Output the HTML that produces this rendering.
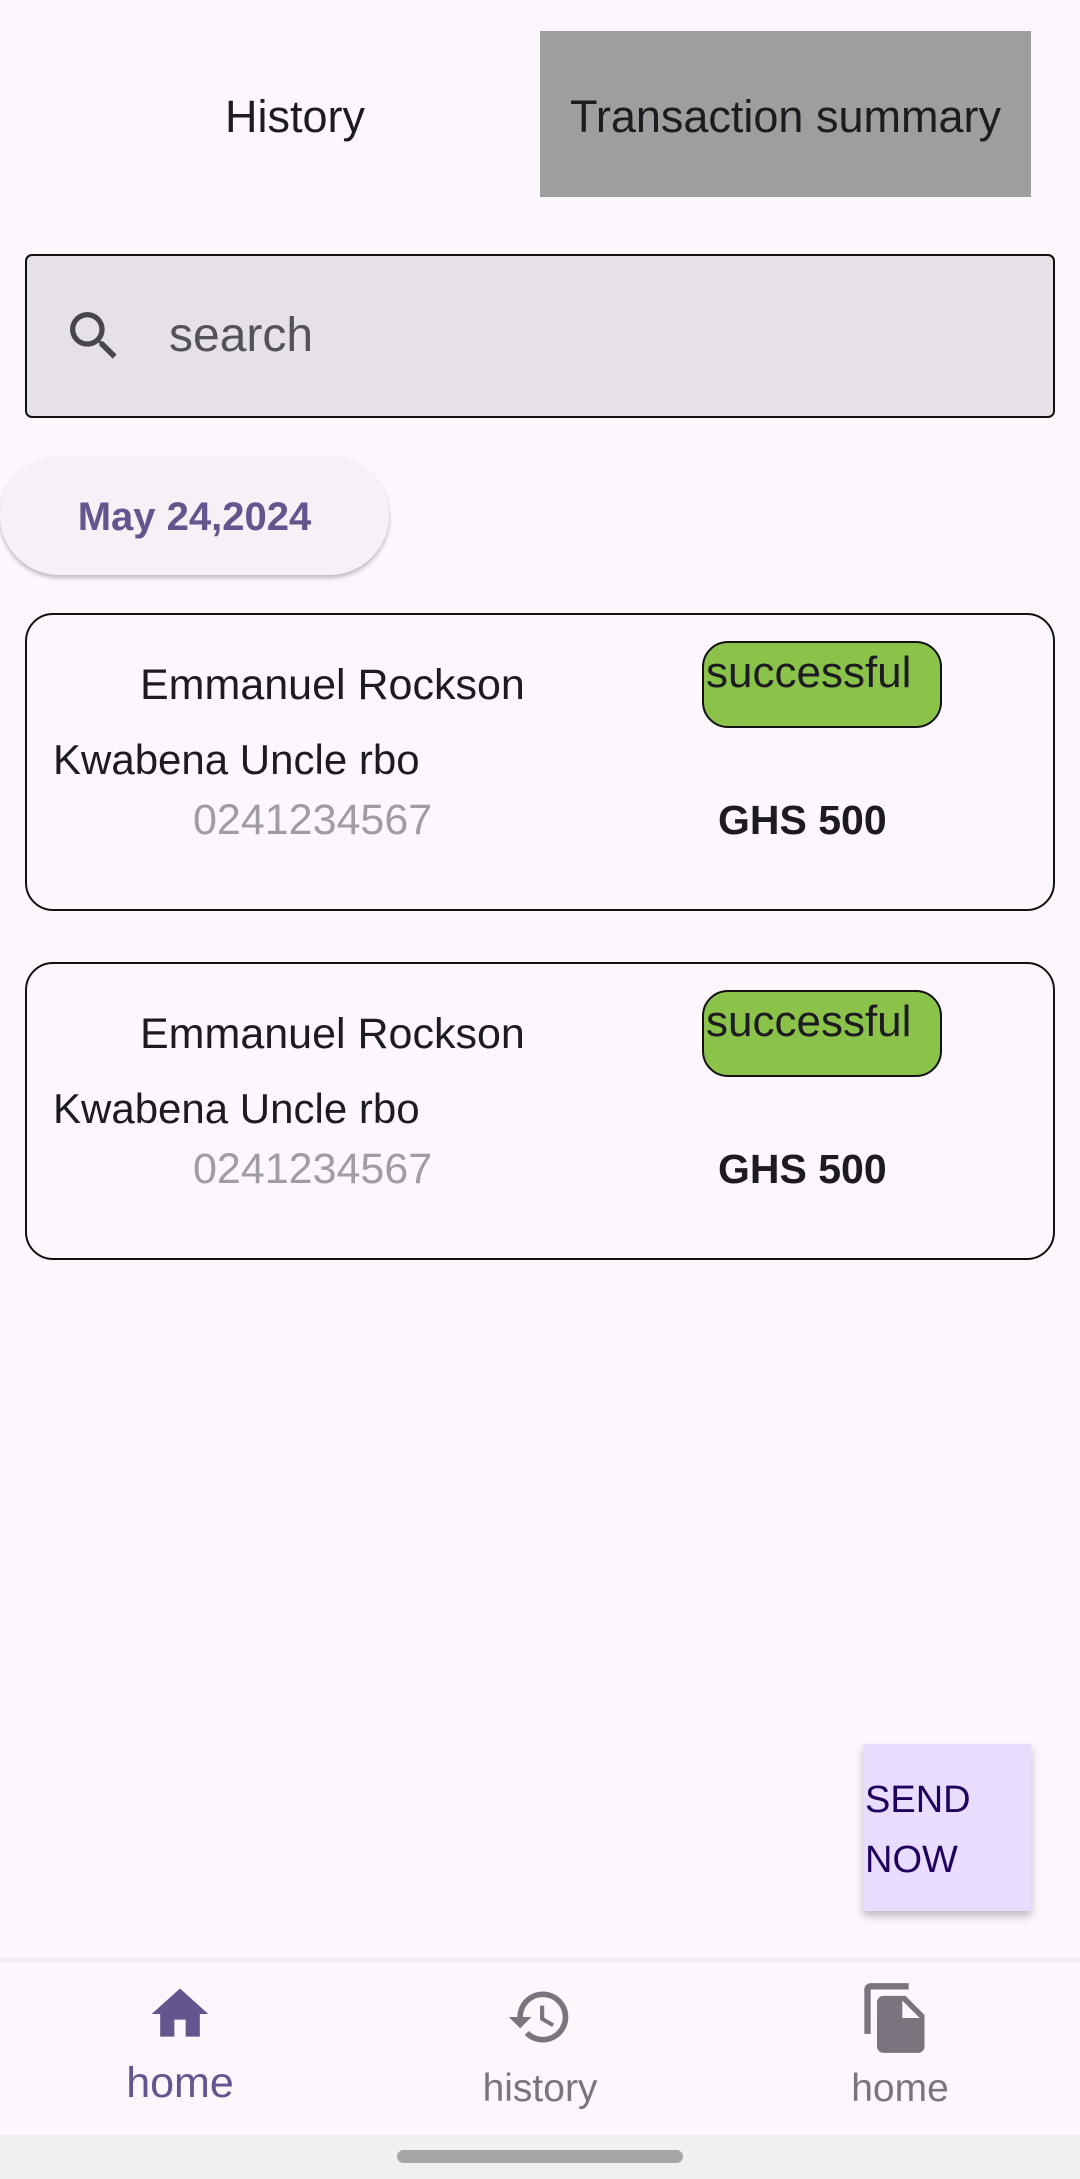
<!DOCTYPE html>
<html><head><meta charset="utf-8"><style>
*{margin:0;padding:0;box-sizing:border-box}
body{width:1080px;height:2179px;background:#fdf7fd;font-family:"Liberation Sans",sans-serif;position:relative;overflow:hidden;color:#1d1b20;line-height:1}
.abs{position:absolute}
.card{position:absolute;left:25px;width:1030px;height:298px;border:2.5px solid #111;border-radius:28px}
.card .n{position:absolute;left:113px;top:49px;font-size:43px}
.card .k{position:absolute;left:26px;top:124px;font-size:42px}
.card .p{position:absolute;left:166px;top:184px;font-size:43px;color:#a09ca3}
.card .b{position:absolute;left:675px;top:26px;width:240px;height:87px;background:#8bc34a;border:2px solid #111;border-radius:26px;font-size:44px;padding:8px 0 0 2px}
.card .g{position:absolute;left:691px;top:185px;font-size:41px;font-weight:bold}
</style></head><body>
<div class="abs" style="left:0;top:94px;width:590px;text-align:center;font-size:45px">History</div>
<div class="abs" style="left:540px;top:31px;width:491px;height:166px;background:#9e9e9e"></div>
<div class="abs" style="left:540px;top:94px;width:491px;text-align:center;font-size:45px;white-space:nowrap">Transaction summary</div>
<div class="abs" style="left:25px;top:254px;width:1030px;height:164px;background:#e6e0e8;border:2.5px solid #111;border-radius:7px"></div>
<svg class="abs" style="left:62px;top:304px" width="64" height="64" viewBox="0 0 24 24"><path fill="#49454f" d="M15.5 14h-.79l-.28-.27A6.47 6.47 0 0 0 16 9.5 6.5 6.5 0 1 0 9.5 16c1.61 0 3.09-.59 4.23-1.57l.27.28v.79l5 4.99L20.49 19l-4.99-5zm-6 0C7.01 14 5 11.99 5 9.5S7.01 5 9.5 5 14 7.01 14 9.5 11.99 14 9.5 14z"/></svg>
<div class="abs" style="left:169px;top:312px;font-size:48px;color:#55515a">search</div>
<div class="abs" style="left:0;top:456px;width:389px;height:119px;background:#f6f0f7;border-radius:60px;box-shadow:0 3px 4px rgba(0,0,0,.25)"></div>
<div class="abs" style="left:0;top:497px;width:389px;text-align:center;font-size:40px;color:#65558f;font-weight:600">May 24,2024</div>
<div class="card" style="top:613px"><div class="n">Emmanuel Rockson</div><div class="k">Kwabena Uncle rbo</div><div class="p">0241234567</div><div class="b">successful</div><div class="g">GHS 500</div></div>
<div class="card" style="top:962px"><div class="n">Emmanuel Rockson</div><div class="k">Kwabena Uncle rbo</div><div class="p">0241234567</div><div class="b">successful</div><div class="g">GHS 500</div></div>
<div class="abs" style="left:863px;top:1744px;width:168px;height:167px;background:#e8ddff;box-shadow:0 5px 8px rgba(0,0,0,.25);color:#21005d;font-size:38px;font-weight:500;padding:26px 0 0 2px;line-height:60px">SEND<br>NOW</div>
<div class="abs" style="left:0;top:1958px;width:1080px;height:4px;background:#f3edf3"></div>
<div class="abs" style="left:0;top:2135px;width:1080px;height:44px;background:#f0f0f0"></div>
<div class="abs" style="left:397px;top:2150px;width:286px;height:13px;background:#a6a6a6;border-radius:7px"></div>
<svg class="abs" style="left:146px;top:1980px" width="68" height="68" viewBox="0 0 24 24"><path fill="#65558f" d="M10 20v-6h4v6h5v-8h3L12 3 2 12h3v8z"/></svg>
<div class="abs" style="left:80px;top:2062px;width:200px;text-align:center;font-size:43px;color:#65558f">home</div>
<svg class="abs" style="left:506px;top:1983px" width="68" height="68" viewBox="0 0 24 24"><path fill="#79747e" d="M13 3a9 9 0 0 0-9 9H1l3.89 3.89.07.14L9 12H6c0-3.87 3.13-7 7-7s7 3.13 7 7-3.13 7-7 7c-1.93 0-3.68-.79-4.94-2.06l-1.42 1.42A8.95 8.95 0 0 0 13 21a9 9 0 0 0 0-18zm-1 5v5l4.28 2.54.72-1.21-3.5-2.08V8H12z"/></svg>
<div class="abs" style="left:440px;top:2069px;width:200px;text-align:center;font-size:39px;color:#79747e">history</div>
<svg class="abs" style="left:858px;top:1980px" width="76" height="76" viewBox="0 0 24 24"><path fill="#79747e" d="M16 1H4c-1.1 0-2 .9-2 2v14h2V3h12V1zm-1 4l6 6v10c0 1.1-.9 2-2 2H7.99C6.89 23 6 22.1 6 21l.01-14c0-1.1.89-2 1.99-2h7zm-1 7h5.5L14 6.5V12z"/></svg>
<div class="abs" style="left:800px;top:2069px;width:200px;text-align:center;font-size:39px;color:#79747e">home</div>
</body></html>
